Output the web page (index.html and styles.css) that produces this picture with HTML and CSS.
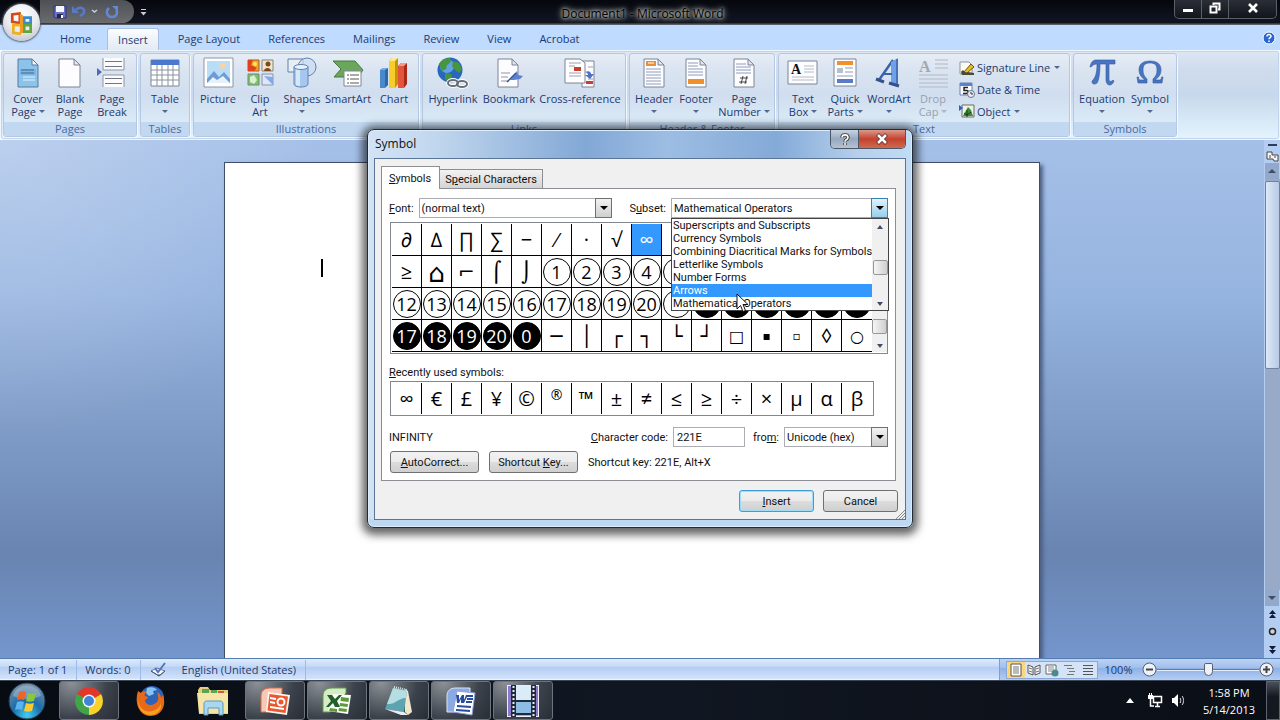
FILE: index.html
```html
<!DOCTYPE html>
<html lang="en">
<head>
	<title>Document1 - Microsoft Word</title>
	<meta charset="utf-8">
	<link rel="stylesheet" href="styles.css">
</head>
<body>
<div class="desktop">
	<!-- title bar -->
	<header class="titlebar">
		<div class="qat">
			<button class="qat-btn" aria-label="Save"><svg width="14" height="14" viewBox="0 0 14 14"><path d="M1 1h12v12H2l-1-1z" fill="#6a70c4" stroke="#2f3480"/><path d="M3 1h8v6H3z" fill="#f4f6ff"/><path d="M4 9h6v4H4z" fill="#22264e"/><path d="M8 10h2v3H8z" fill="#fff"/></svg></button>
			<button class="qat-btn" aria-label="Undo"><svg width="14" height="14" viewBox="0 0 14 14"><path d="M4 5c3-4 9-2 8 2 0 2-2 3-4 4" fill="none" stroke="#5878c8" stroke-width="2.500"/><path d="M0 1v7h7z" fill="#5878c8"/></svg></button>
			<span class="qat-caret"><svg width="7" height="5" viewBox="0 0 7 5"><path d="M1 1l2.500 2L6 1" fill="none" stroke="#c9ced8" stroke-width="1.500"/></svg></span>
			<button class="qat-btn" aria-label="Redo"><svg width="14" height="14" viewBox="0 0 14 14"><path d="M4 3C0 6 2 12 7 12c5 0 6-5 4-7" fill="none" stroke="#6389d6" stroke-width="2.500"/><path d="M7 1h6v6z" fill="#6389d6"/></svg></button>
		</div>
		<button class="qat-more" aria-label="Customize"><svg width="7" height="7" viewBox="0 0 7 7"><path d="M1 .5h5" stroke="#ccc"/><path d="M.5 3h6l-3 3.500z" fill="#ccc"/></svg></button>
		<h1 class="title">Document1 - Microsoft Word</h1>
		<div class="win-btns">
			<button class="win-btn" aria-label="Minimize"><svg width="12" height="12" viewBox="0 0 12 12"><path d="M1 7h10v3H1z" fill="#fff"/></svg></button>
			<button class="win-btn" aria-label="Restore"><svg width="12" height="12" viewBox="0 0 12 12"><path d="M4.500 3V1.500h6v6H9M1.500 4.500h6v6h-6z" fill="none" stroke="#fff" stroke-width="2"/></svg></button>
			<button class="win-btn win-close" aria-label="Close"><svg width="12" height="12" viewBox="0 0 12 12"><path d="M2 2l8 8M10 2l-8 8" stroke="#fff" stroke-width="2.600"/></svg></button>
		</div>
	</header>
	<button class="office" aria-label="Office Button"><svg width="26" height="26" viewBox="0 0 24 24"><g fill="none" stroke-width="2.500"><path d="M11 3L3 4v7l7 1V4" stroke="#d5471c"/><path d="M14 7h6v5h-6z" stroke="#3c8ac9"/><path d="M10 14H4v7l7 1" stroke="#f0b01e"/><path d="M14 14h6v6h-6z" stroke="#62a53c"/></g><path d="M10 3l3 2v16l-3 1z" fill="#f29a28"/></svg></button>

	<!-- ribbon tabs -->
	<nav class="tabs">
		<button class="tab">Home</button>
		<button class="tab tab-on">Insert</button>
		<button class="tab">Page Layout</button>
		<button class="tab">References</button>
		<button class="tab">Mailings</button>
		<button class="tab">Review</button>
		<button class="tab">View</button>
		<button class="tab">Acrobat</button>
		<button class="help" aria-label="Help"><svg width="14" height="14" viewBox="0 0 14 14"><circle cx="7" cy="7" r="6" fill="#2a65d0" stroke="#fff" stroke-width="1"/><path d="M5 5.500C5 3 9 3 9 5.300 9 6.600 7 6.600 7 8.200M7 9.600v1.500" fill="none" stroke="#fff" stroke-width="1.500"/></svg></button>
	</nav>

	<!-- ribbon -->
	<section class="ribbon">
		<div class="group">
			<div class="group-body">
				<button class="big"><svg class="icon" viewBox="0 0 32 32"><path d="M6 2h14l6 6v22H6z" fill="#8cc3ea" stroke="#557a9d"/><path d="M20 2v6h6z" fill="#eef7ff" stroke="#557a9d"/><path d="M8 12h16v6H8z" fill="#7db6e2"/><path d="M9 13h13M9 16h13" stroke="#3c688f"/><path d="M11 20h12M11 23h12" stroke="#e3f3fd"/></svg><span>Cover<br>Page <i class="caret"></i></span></button>
				<button class="big"><svg class="icon" viewBox="0 0 32 32"><path d="M5 2h15l6 6v22H5z" fill="#fdfdff" stroke="#7c8493"/><path d="M20 2v6h6z" fill="#dfe5ee" stroke="#7c8493"/></svg><span>Blank<br>Page</span></button>
				<button class="big"><svg class="icon" viewBox="0 0 32 32"><path d="M7 1h21v12H7zM7 18h21v12H7z" fill="#fcfcff"/><path d="M7 1v12h21V1M7 30V18h21v12" fill="none" stroke="#8b93a2"/><path d="M9 4.500h17M9 9.500h17M9 21.500h17M9 26.500h17" stroke="#6f7684"/><path d="M1 11v8l5-4z" fill="#5268bd"/></svg><span>Page<br>Break</span></button>
			</div>
			<div class="group-name">Pages</div>
		</div>
		<div class="group">
			<div class="group-body">
				<button class="big"><svg class="icon" viewBox="0 0 32 32"><path d="M2 3h28v26H2z" fill="#fff" stroke="#7f8796"/><path d="M2 3h28v5H2z" fill="#4b78cc"/><path d="M2 13h28M2 18h28M2 23h28M8 8v21M13 8v21M19 8v21M24 8v21" stroke="#8991a0"/></svg><span>Table<br><i class="caret"></i></span></button>
			</div>
			<div class="group-name">Tables</div>
		</div>
		<div class="group">
			<div class="group-body">
				<button class="big"><svg class="icon" viewBox="0 0 32 32"><path d="M2 1h29v29H2z" fill="#fff" stroke="#8d95a5"/><path d="M5 4h23v22H5z" fill="#b9ddf7"/><circle cx="21" cy="9" r="3" fill="#f7d3a5"/><path d="M5 22l7-8 5 6 5-5 6 7v4H5z" fill="#6e9bd4"/><path d="M5 26l6-6 4 3 6-4 7 7z" fill="#e6f2fb"/></svg><span>Picture</span></button>
				<button class="big"><svg class="icon" viewBox="0 0 32 32"><path d="M4 3h11v11H4z" fill="#f6a51d" stroke="#a3582b"/><path d="M4 3h5l-2 5 6 3-3 3H4z" fill="#e0401d"/><circle cx="11" cy="7" r="2" fill="#ffe66a"/><path d="M18 3h11v11H18z" fill="#f3e6c8" stroke="#838383"/><path d="M20 14c0-4 7-4 7 0z" fill="#7b4a1e"/><circle cx="24" cy="7" r="2.500" fill="#7b4a1e"/><path d="M4 17h11v11H4z" fill="#7cc36e" stroke="#6c8b6c"/><path d="M6 20l4-2 3 5-3 4-4-2z" fill="#d8f0d0"/><path d="M18 17h11v11H18z" fill="#dbe7fb" stroke="#8b93a2"/><path d="M20 19l9 1v8z" fill="#85a8e6"/></svg><span>Clip<br>Art</span></button>
				<button class="big"><svg class="icon" viewBox="0 0 32 32"><path d="M2 2h15v13H2z" fill="#e8eef6" stroke="#6580a6"/><circle cx="21" cy="10" r="9" fill="#c8dcf3" fill-opacity=".7" stroke="#6580a6"/><path d="M8 10v17c0 4 14 4 14 0V10z" fill="#a6c8ee" stroke="#5f83b5"/><path d="M10 12v16c2 1 3 1 4 1V13z" fill="#d6e8fa"/><ellipse cx="15" cy="10" rx="7" ry="2.500" fill="#e6f1fc" stroke="#5f83b5"/></svg><span>Shapes<br><i class="caret"></i></span></button>
				<button class="big w50"><svg class="icon" viewBox="0 0 32 32"><path d="M1 4h22l8 9-5 7H2l7-8z" fill="#6aa75c" stroke="#477a3e"/><path d="M12 14h17v15H12z" fill="#fff" stroke="#7e8794"/><path d="M15 18h2M15 22h2M15 26h2M18 18h9M18 22h9M18 26h9" stroke="#555"/></svg><span>SmartArt</span></button>
				<button class="big"><svg class="icon" viewBox="0 0 32 32"><path d="M2 13l3-2h5v17l-3 3H2z" fill="#2f6aa8"/><path d="M2 13l3-2h5l-3 2z" fill="#79ade0"/><path d="M2 13h5v18H2z" fill="#4a8aca"/><path d="M11 4l3-3h6v26l-3 4h-6z" fill="#c99300"/><path d="M11 4h6v27h-6z" fill="#f7cd2c"/><path d="M11 4l3-3h6l-3 3z" fill="#ffe98a"/><path d="M20 9l3-3h6v21l-3 4h-6z" fill="#a82918"/><path d="M20 9h6v22h-6z" fill="#e2543b"/><path d="M20 9l3-3h6l-3 3z" fill="#f59b87"/></svg><span>Chart</span></button>
			</div>
			<div class="group-name">Illustrations</div>
		</div>
		<div class="group">
			<div class="group-body">
				<button class="big w54"><svg class="icon" viewBox="0 0 32 32"><circle cx="13" cy="13" r="12.500" fill="#2767bd"/><circle cx="10" cy="9" r="7" fill="#63a2e8"/><path d="M2 7c3-5 8-6 11-6l1 4-4 3-1 4-4 2zM16 4l6 2 3 6-3 4-4-3-3-4zM8 16l6 1 1 4-3 5-4-4z" fill="#48953f"/><g fill="none" stroke="#fff" stroke-width="4"><ellipse cx="16" cy="26" rx="5" ry="3"/><ellipse cx="25" cy="27" rx="5" ry="3"/></g><g fill="none" stroke="#666d76" stroke-width="2"><ellipse cx="16" cy="26" rx="5" ry="3"/><ellipse cx="25" cy="27" rx="5" ry="3"/></g></svg><span>Hyperlink</span></button>
				<button class="big w58"><svg class="icon" viewBox="0 0 32 32"><path d="M5 2h14l6 6v22H5z" fill="#fdfdff" stroke="#7c8493"/><path d="M19 2v6h6z" fill="#dfe5ee" stroke="#7c8493"/><path d="M8 16h9M8 20h7M8 24h8" stroke="#8d95a5"/><path d="M17 23l7-9 1 4 5 1-3 3-6 1z" fill="#5d82cf"/><path d="M14 25l9-9" stroke="#33559c" stroke-width="1.500"/></svg><span>Bookmark</span></button>
				<button class="big w84"><svg class="icon" viewBox="0 0 32 32"><path d="M18 4h12v26H18z" fill="#fbfbfd" stroke="#7c8493"/><path d="M1 2h15l5 4v20H1z" fill="#fff" stroke="#7c8493"/><path d="M5 6h12M5 9h6M5 16h12M5 19h12M24 10h5M24 22h5" stroke="#9aa1ad"/><path d="M10 10h7v4h-7zM22 24h7v3h-7z" fill="#c8402d"/><path d="M21 15c4-2 6 0 6 2h3l-4 5-5-4h3c0-2-1-2-3-3z" fill="#4a72cc"/></svg><span>Cross-reference</span></button>
			</div>
			<div class="group-name">Links</div>
		</div>
		<div class="group">
			<div class="group-body">
				<button class="big"><svg class="icon" viewBox="0 0 32 32"><path d="M6 2h14l6 6v22H6z" fill="#fdfdff" stroke="#7c8493"/><path d="M20 2v6h6z" fill="#dfe5ee" stroke="#7c8493"/><path d="M8 4h10v5H8z" fill="#e69138"/><path d="M10 6h6" stroke="#fff"/><path d="M8 12h15M8 15h15M8 18h15M8 21h15M8 24h15M8 27h15" stroke="#8d9cbd"/></svg><span>Header<br><i class="caret"></i></span></button>
				<button class="big"><svg class="icon" viewBox="0 0 32 32"><path d="M6 2h14l6 6v22H6z" fill="#fdfdff" stroke="#7c8493"/><path d="M20 2v6h6z" fill="#dfe5ee" stroke="#7c8493"/><path d="M8 6h10M8 9h10M8 12h15M8 15h15M8 18h15" stroke="#8d9cbd"/><path d="M8 22h16v5H8z" fill="#f0902a"/></svg><span>Footer<br><i class="caret"></i></span></button>
				<button class="big w54"><svg class="icon" viewBox="0 0 32 32"><path d="M6 2h14l6 6v22H6z" fill="#fdfdff" stroke="#7c8493"/><path d="M20 2v6h6z" fill="#dfe5ee" stroke="#7c8493"/><path d="M8 7h10M8 10h15M8 13h15M8 16h15" stroke="#8d9cbd"/><path d="M15 19l-2 8M19 19l-2 8M12 21h8M11 25h8" stroke="#444"/></svg><span>Page<br>Number <i class="caret"></i></span></button>
			</div>
			<div class="group-name">Header &amp; Footer</div>
		</div>
		<div class="group">
			<div class="group-body">
				<button class="big"><svg class="icon" viewBox="0 0 32 32"><path d="M1 4h29v23H1z" fill="#fdfdff" stroke="#7c8493"/><path d="M17 9h10M17 12h10M17 15h10M5 20h22M5 23h22" stroke="#b3bac6"/><text x="4" y="17" font-family="Liberation Serif, serif" font-weight="bold" font-size="14" fill="#111">A</text></svg><span>Text<br>Box <i class="caret"></i></span></button>
				<button class="big"><svg class="icon" viewBox="0 0 32 32"><path d="M5 2h22v27H5z" fill="#fdfdff" stroke="#7c8493"/><path d="M8 4h16v4H8z" fill="#f0902a"/><path d="M8 11h6v5H8z" fill="#b5bfd2"/><path d="M16 11h8M16 15h8M8 19h16" stroke="#8d9cbd"/><path d="M8 22h16v4H8z" fill="#5a7cc6"/></svg><span>Quick<br>Parts <i class="caret"></i></span></button>
				<button class="big w46"><svg class="icon" viewBox="0 0 32 32"><path d="M6 23L20 3" stroke="#3c62ab" stroke-width="2.500"/><path d="M18 5l7-4v27l-7-2z" fill="#6da2e8"/><path d="M24 2v26" stroke="#3c62ab" stroke-width="1.500"/><path d="M11 17h8" stroke="#3c62ab" stroke-width="2"/><path d="M3 22l8 3M16 26l10 3" stroke="#33528d" stroke-width="3"/></svg><span>WordArt<br><i class="caret"></i></span></button>
				<button class="big" disabled><svg class="icon" viewBox="0 0 32 32"><path d="M18 3h13M18 7h13M18 11h13M2 18h29M2 22h29M2 26h29M2 30h29" stroke="#b3b8c0"/><text x="2" y="15" font-family="Liberation Serif, serif" font-weight="bold" font-size="16" fill="#a3a7ad">A</text></svg><span>Drop<br>Cap <i class="caret"></i></span></button>
				<div class="small-col">
					<button class="small"><svg width="16" height="16" viewBox="0 0 16 16"><path d="M1 2h9l3 3v9H1z" fill="#fbfbf4" stroke="#8b93a2"/><path d="M4 13l8-9 3 3-7 6z" fill="#e9b92b" stroke="#6d5410"/><path d="M2 12c3-5 3 3 7 0l6 1v2H3z" fill="#4b4b34"/></svg>Signature Line <i class="caret"></i></button>
					<button class="small"><svg width="16" height="16" viewBox="0 0 16 16"><path d="M1 1h12v12H1z" fill="#fff" stroke="#6a7fae"/><path d="M1 1h12v3H1z" fill="#5a82cf"/><path d="M9 5.500H5v3h3c2 0 1 3-1 3H4" fill="none" stroke="#222" stroke-width="1.500"/><circle cx="12" cy="12" r="3.500" fill="#e8eef8" stroke="#6a748a"/><path d="M12 10v2h2" fill="none" stroke="#333"/></svg>Date &amp; Time</button>
					<button class="small"><svg width="16" height="16" viewBox="0 0 16 16"><path d="M3 2h12v12H3z" fill="#eef2e6" stroke="#65705c"/><path d="M0 2l4 3-4 3z" fill="#2f5fcc"/><path d="M4 13l5-9 3 3 2 6z" fill="#3c8b3a"/><path d="M8 7v7M5 10l3 2 4-3" stroke="#173d18" fill="none"/></svg>Object <i class="caret"></i></button>
				</div>
			</div>
			<div class="group-name">Text</div>
		</div>
		<div class="group">
			<div class="group-body">
				<button class="big w50"><svg class="icon" viewBox="0 0 32 32"><path d="M4 10c1-5 3-7 6-7h19v4h-6v15c0 3 2 3 4 1l1 1c-2 6-8 5-8-1V7h-6c0 8-1 16-3 19-2 2-5 1-5-1 0-3 5-2 5-18-3 0-4 1-6 3z" fill="#4874c4" stroke="#38599a" stroke-width=".6"/></svg><span>Equation<br><i class="caret"></i></span></button>
				<button class="big w46"><svg class="icon" viewBox="0 0 32 32"><path d="M3 20h1.500c0 3 1 3 3 3h3.500C7 20 5 17 5 13 5 7 9 4 16 4s11 3 11 9c0 4-2 7-6 10h3.500c2 0 3 0 3-3H29l-1 6h-9v-4c3-3 4-5 4-9 0-5-2-7-7-7s-7 2-7 7c0 4 1 6 4 9v4H4z" fill="#4874c4" stroke="#38599a" stroke-width=".6"/></svg><span>Symbol<br><i class="caret"></i></span></button>
			</div>
			<div class="group-name">Symbols</div>
		</div>
	</section>

	<!-- document -->
	<main class="work">
		<div class="canvas">
			<div class="page"><span class="text-cursor"></span></div>
		</div>
		<div class="vscroll">
			<span class="split"></span>
			<svg width="13" height="13" viewBox="0 0 13 13"><path d="M1 2h5v3h6v6H8L7 9H1z" fill="#f6f6f6" stroke="#444"/><path d="M4 5v3M8 7h2" stroke="#444"/></svg>
			<span class="vs-arrow"><i class="tri-up"></i></span>
			<span class="vs-track"><span class="vs-thumb"></span></span>
			<span class="vs-arrow"><i class="tri-down"></i></span>
			<span class="browse">
				<svg width="9" height="9" viewBox="0 0 9 9"><path d="M4.500 0L8 4H1zM4.500 4L8 8H1z" fill="#111c3b"/></svg>
				<svg width="9" height="9" viewBox="0 0 9 9"><circle cx="4.500" cy="4.500" r="3" fill="#cfd3da" stroke="#222" stroke-width="1.500"/></svg>
				<svg width="9" height="9" viewBox="0 0 9 9"><path d="M4.500 5L8 1H1zM4.500 9L8 5H1z" fill="#111c3b"/></svg>
			</span>
		</div>
	</main>

	<!-- status bar -->
	<footer class="status">
		<span class="st-item">Page: 1 of 1</span>
		<span class="st-item">Words: 0</span>
		<span class="st-proof"><svg width="17" height="16" viewBox="0 0 17 16"><path d="M1 9l6-3 8 3-6 5z" fill="#f4f6fa" stroke="#6a7894"/><path d="M1 9l8 5v-2M9 14l6-5" fill="none" stroke="#46546e"/><path d="M5 6l3 4 7-9" fill="none" stroke="#5277bd" stroke-width="2"/></svg></span>
		<span class="st-item">English (United States)</span>
		<div class="st-right">
			<div class="views">
				<button class="view view-on" aria-label="Print Layout"><svg width="14" height="14" viewBox="0 0 14 14"><path d="M2 1h10v12H2z" fill="#fff" stroke="#555"/><path d="M4 4h6M4 6h6M4 8h6M4 10h6" stroke="#777"/></svg></button>
				<button class="view" aria-label="Full Screen Reading"><svg width="14" height="14" viewBox="0 0 14 14"><path d="M1 2l5 2v8l-5-2zM13 2L8 4v8l5-2z" fill="#f5f5f5" stroke="#555"/><path d="M2 5l3 1M2 8l3 1M9 6l3-1M9 9l3-1" stroke="#777"/></svg></button>
				<button class="view" aria-label="Web Layout"><svg width="14" height="14" viewBox="0 0 14 14"><path d="M1 2h10v9H1z" fill="#fff" stroke="#666"/><path d="M3 4h6M3 6h6M3 8h4" stroke="#888"/><circle cx="10" cy="10" r="3.500" fill="#4a8a8f"/></svg></button>
				<button class="view" aria-label="Outline"><svg width="14" height="14" viewBox="0 0 14 14"><path d="M1 2.500h8M4 5.500h7M6 8.500h6M4 11.500h7" stroke="#777"/></svg></button>
				<button class="view" aria-label="Draft"><svg width="14" height="14" viewBox="0 0 14 14"><path d="M2 2.500h10M2 5.500h10M2 8.500h10M2 11.500h10" stroke="#555"/></svg></button>
			</div>
			<button class="zoom-text">100%</button>
			<button class="zoom-btn" aria-label="Zoom Out"><svg width="15" height="15" viewBox="0 0 15 15"><circle cx="7.500" cy="7.500" r="6.500" fill="#eef2f8" stroke="#555f70"/><path d="M4 7.500h7" stroke="#444" stroke-width="2"/></svg></button>
			<input class="zoom-range" type="range" min="0" max="100" value="50" aria-label="Zoom">
			<button class="zoom-btn" aria-label="Zoom In"><svg width="15" height="15" viewBox="0 0 15 15"><circle cx="7.500" cy="7.500" r="6.500" fill="#eef2f8" stroke="#555f70"/><path d="M4 7.500h7M7.500 4v7" stroke="#444" stroke-width="2"/></svg></button>
		</div>
	</footer>

	<!-- windows taskbar -->
	<div class="taskbar">
		<button class="orb" aria-label="Start"><svg width="38" height="38" viewBox="0 0 38 38"><defs><radialGradient id="orb" cx=".5" cy=".9" r=".9"><stop offset="0" stop-color="#3fd0f5"/><stop offset=".45" stop-color="#1c6ca8"/><stop offset="1" stop-color="#7c93a8"/></radialGradient></defs><circle cx="19" cy="19" r="18" fill="url(#orb)" stroke="#22384c"/><path d="M5 14c3-14 25-14 28 0-9 4-19 4-28 0z" fill="#fff" fill-opacity=".25"/><path d="M11 10c2-1 5-1 7 0l-2 8c-2-1-5-1-7 0z" fill="#f0642a"/><path d="M20 11c2 1 5 1 8 0l-2 8c-3 1-6 1-8 0z" fill="#8cc63e"/><path d="M9 20c2-1 5-1 7 0l-2 8c-2-1-5-1-7 0z" fill="#5ab4ee"/><path d="M18 21c2 1 5 1 8 0l-2 8c-3 1-6 1-8 0z" fill="#fcc92e"/></svg></button>
		<button class="task task-run" aria-label="Chrome"><svg width="30" height="30" viewBox="0 0 30 30"><path d="M15 15L2.900 8A14 14 0 0 1 27.100 8z" fill="#e0392b"/><path d="M15 15L27.100 8A14 14 0 0 1 15 29z" fill="#fbd22c"/><path d="M15 15L15 29A14 14 0 0 1 2.900 8z" fill="#3fa546"/><path d="M15 8h12L15 15z" fill="#e0392b"/><path d="M3 8l6 10 6-3z" fill="#3fa546"/><path d="M21 18l-6 11V15z" fill="#fbd22c"/><circle cx="15" cy="15" r="6.500" fill="#f4f6f8"/><circle cx="15" cy="15" r="5" fill="#3f84d8"/></svg></button>
		<button class="task" aria-label="Firefox"><svg width="32" height="32" viewBox="0 0 32 32"><circle cx="17" cy="13" r="12" fill="#2d63b8"/><path d="M12 3c5-2 9 0 10 2l-4 1 1 3-5 2-3-3z" fill="#86c3f0"/><path d="M3 6l3 2c2-2 4-2 6-1-2 1-3 3-2 4l3 1c0 2-3 2-3 4 1 4 6 5 9 3 5-2 5-7 3-12 3 2 4 3 4 6l2-3c3 8 1 20-12 21C4 31-1 18 3 6z" fill="#e66a17"/><path d="M3 13c0 9 6 15 14 13 5-1 8-4 9-8 1 8-5 12-10 12C8 30 2 24 3 13z" fill="#f6a11f"/></svg></button>
		<button class="task" aria-label="Explorer"><svg width="34" height="30" viewBox="0 0 34 30"><path d="M2 4l2-3h8l2 3h18v24H3z" fill="#e9cf7c"/><path d="M6 3h7v4H6zM15 4h6v4h-6z" fill="#5aa55a"/><path d="M22 5h6v3h-6z" fill="#cf5b45"/><path d="M1 7h31v20H3z" fill="#f6e6a6"/><path d="M8 29V18c0-3 2-3 3-3h13c2 0 3 1 3 3v11h-4v-7H12v7z" fill="#a9d6f0" stroke="#5d98c0"/></svg></button>
		<button class="task task-run" aria-label="PowerPoint"><svg width="32" height="30" viewBox="0 0 32 30"><path d="M2 10c0-5 3-8 9-8h12v5L9 26H2z" fill="#f6c9b6" stroke="#d5694a"/><path d="M9 6l22 3-3 20-21-3z" fill="#fff6f0"/><path d="M10.500 8l18.500 2.500-2.500 16.500L8.500 24.500z" fill="#e9582f"/><path d="M11 11l6 1v2l-6-1zM11 15l5 1v2l-5-1zM11 20l14 2v2l-14-2z" fill="#fff"/><circle cx="22" cy="16" r="3.500" fill="none" stroke="#fff" stroke-width="2"/></svg></button>
		<button class="task task-run" aria-label="Excel"><svg width="32" height="30" viewBox="0 0 32 30"><path d="M2 10c0-5 3-8 9-8h14v5L9 26H2z" fill="#d6ecc6" stroke="#5d9a48"/><path d="M12 8l18 1-3 19-20-3z" fill="#fdfff9"/><path d="M20 11l8 1-.5 4-8-1zM19 17l8 1-.5 3-8-1zM18 22l8 1-.5 3-8-1zM9 22l7 1v3l-8-1z" fill="#5e9a3c"/><path d="M6 9h5l3 4 4-4h3l-5 6 3 6h-5l-2-4-4 4H5l5-6z" fill="#205e2a"/></svg></button>
		<button class="task task-run" aria-label="Notepad"><svg width="32" height="30" viewBox="0 0 32 30"><path d="M22 3l3 2 4 21-4 3-3-3z" fill="#efe6cc"/><path d="M10 2l14 3-3 21-19-3z" fill="#5da3b0"/><path d="M10 2l14 3-1 7c-8 0-11 7-19 6z" fill="#b6dde2"/><path d="M2 23l19 3 4 3-7 0z" fill="#e9eff0"/><path d="M11 1l13 3" stroke="#d9e4e6" stroke-width="2" stroke-dasharray="1 1"/></svg></button>
		<button class="task task-run" aria-label="Word"><svg width="32" height="30" viewBox="0 0 32 30"><path d="M2 10c0-5 3-8 9-8h14v5L9 26H2z" fill="#8ba9e2" stroke="#dbe5f8"/><path d="M12 5l18 2-3 22-19-3z" fill="#fdfdff" stroke="#8aa4d6"/><path d="M22 10h6M22 13h6M21 16h6M12 20l14 1M11 24l14 1" stroke="#2b4c9c" stroke-width="2"/><path d="M11 9h3v5l3-5h2v5l2-5h2l-4 8h-3v-4l-2 4h-2z" fill="#2b4c9c"/></svg></button>
		<button class="task task-run" aria-label="Video"><svg width="32" height="32" viewBox="0 0 32 32"><path d="M0 0h32v32H0z" fill="#f0ecfb"/><path d="M1 1h3v30H1zM28 1h3v30h-3z" fill="#8a78c8"/><path d="M4 0h5v32H4zM24 0h5v32h-5z" fill="#202a3a"/><path d="M6.500 1v30M26.500 1v30" stroke="#e8ecf4" stroke-width="2" stroke-dasharray="2 2"/><path d="M9 1h15v14H9z" fill="#d9ecf8"/><path d="M9 17h15v14H9z" fill="#8dbce4"/><path d="M9 16h15M9 29h15" stroke="#202a3a" stroke-width="2"/></svg></button>
		<div class="tray">
			<svg width="8" height="5" viewBox="0 0 8 5"><path d="M4 0l4 5H0z" fill="#fff"/></svg>
			<svg width="15" height="15" viewBox="0 0 15 15"><path d="M5.500 3.500h8v6h-8zM7 13.500h5M9.500 10v3M2.500 6v7H6" fill="none" stroke="#fff" stroke-width="1.500"/><path d="M0 2h5v4H0zM1 0h1v2H1zM3 0h1v2H3z" fill="#fff"/></svg>
			<svg width="15" height="15" viewBox="0 0 15 15"><path d="M1 5h2l4-4v13l-4-4H1z" fill="#fff"/><path d="M9 5c1 1 1 4 0 5M11 3c2 2 2 7 0 9" fill="none" stroke="#ddd"/></svg>
			<div class="clock">1:58 PM<br>5/14/2013</div>
			<button class="show-desktop" aria-label="Show desktop"></button>
		</div>
	</div>

	<!-- Symbol dialog -->
	<div class="dialog" role="dialog" aria-label="Symbol">
		<div class="dlg-title">
			<h2>Symbol</h2>
			<div class="dlg-btns">
				<button class="dlg-help" aria-label="Help"><svg width="12" height="13" viewBox="0 0 12 13"><path d="M3 4.500C3 1 9 1 9 4.500 9 7 6 6.500 6 8.500M6 10v2" fill="none" stroke="#333" stroke-width="3.400"/><path d="M3 4.500C3 1 9 1 9 4.500 9 7 6 6.500 6 8.500M6 10v2" fill="none" stroke="#fff" stroke-width="1.600"/></svg></button>
				<button class="dlg-close" aria-label="Close"><svg width="12" height="12" viewBox="0 0 12 12"><path d="M1.500 1.500l9 9M10.500 1.500l-9 9" stroke="#5b2a2a" stroke-width="4"/><path d="M2 2l8 8M10 2l-8 8" stroke="#fff" stroke-width="2.500"/></svg></button>
			</div>
		</div>
		<div class="client">
			<div class="dtabs">
				<button class="dtab dtab-on"><u>S</u>ymbols</button>
				<button class="dtab">S<u>p</u>ecial Characters</button>
			</div>
			<div class="panel">
				<div class="row font-row">
					<label for="font"><u>F</u>ont:</label>
					<div class="combo combo-font"><select id="font"><option>(normal text)</option></select></div>
					<label class="to-right" for="subset">S<u>u</u>bset:</label>
					<div class="combo combo-subset combo-open">
						<select id="subset"><option>Mathematical Operators</option></select>
						<div class="drop">
							<ul class="drop-list" role="listbox">
								<li>Superscripts and Subscripts</li>
								<li>Currency Symbols</li>
								<li>Combining Diacritical Marks for Symbols</li>
								<li>Letterlike Symbols</li>
								<li>Number Forms</li>
								<li class="hot">Arrows</li>
								<li>Mathematical Operators</li>
							</ul>
							<div class="bar bar-drop"><i class="tri-up"></i><span class="bar-thumb"></span><i class="tri-down"></i></div>
						</div>
					</div>
				</div>
				<div class="sym-box">
					<div class="sym-grid">
						<button>∂</button><button>∆</button><button>∏</button><button>∑</button><button>−</button><button>⁄</button><button>·</button><button>√</button><button class="picked">∞</button><button></button><button></button><button></button><button></button><button></button><button></button><button></button>
						<button>≥</button><button class="large">⌂</button><button>⌐</button><button>⌠</button><button>⌡</button><button><b>1</b></button><button><b>2</b></button><button><b>3</b></button><button><b>4</b></button><button><b></b></button><button></button><button></button><button></button><button></button><button></button><button></button>
						<button><b>12</b></button><button><b>13</b></button><button><b>14</b></button><button><b>15</b></button><button><b>16</b></button><button><b>17</b></button><button><b>18</b></button><button><b>19</b></button><button><b>20</b></button><button><b></b></button><button><b class="neg"></b></button><button><b class="neg"></b></button><button><b class="neg"></b></button><button><b class="neg"></b></button><button><b class="neg"></b></button><button><b class="neg"></b></button>
						<button><b class="neg">17</b></button><button><b class="neg">18</b></button><button><b class="neg">19</b></button><button><b class="neg">20</b></button><button><b class="neg">0</b></button><button>─</button><button>│</button><button>┌</button><button>┐</button><button>└</button><button>┘</button><button class="mid">□</button><button class="tiny">▪</button><button class="tiny">▫</button><button>◊</button><button class="mid">○</button>
					</div>
					<div class="bar bar-grid"><span class="bar-thumb"></span><i class="tri-down"></i></div>
				</div>
				<div class="recent-label"><u>R</u>ecently used symbols:</div>
				<div class="recent">
					<button>∞</button><button>€</button><button>£</button><button>¥</button><button>©</button><button class="sup">®</button><button>™</button><button>±</button><button>≠</button><button>≤</button><button>≥</button><button>÷</button><button>×</button><button>µ</button><button>α</button><button>β</button>
				</div>
				<div class="row code-row">
					<span>INFINITY</span>
					<label class="to-right" for="code"><u>C</u>haracter code:</label>
					<input class="code" id="code" type="text" value="221E">
					<label for="from">fro<u>m</u>:</label>
					<div class="combo combo-from"><select id="from"><option>Unicode (hex)</option></select></div>
				</div>
				<div class="row key-row">
					<button class="btn"><u>A</u>utoCorrect...</button>
					<button class="btn">Shortcut <u>K</u>ey...</button>
					<span>Shortcut key: 221E, Alt+X</span>
				</div>
			</div>
			<div class="dlg-foot">
				<button class="btn btn-main"><u>I</u>nsert</button>
				<button class="btn">Cancel</button>
			</div>
			<svg class="grip" width="10" height="10" viewBox="0 0 10 10"><path d="M1 10l9-9M4 10l6-6M7 10l3-3" stroke="#8a8a8a"/></svg>
		</div>
		<svg class="pointer" width="13" height="20" viewBox="0 0 13 20"><path d="M1 1v15l3.500-3.500L7 18.500l2.500-1-2.500-6H12z" fill="#fff" stroke="#111"/></svg>
	</div>
</div>
</body>
</html>
```
FILE: styles.css
```css
*, *::before, *::after {
	box-sizing: border-box;
}
body {
	margin: 0;
	font-family: "Open Sans", "Noto Sans", sans-serif;
	font-size: 11px;
	color: #1e3a6e;
}
button, input, select {
	font: inherit;
	color: inherit;
	margin: 0;
	padding: 0;
	border: none;
	border-radius: 0;
	background: none;
}
svg {
	display: block;
	flex: none;
}
h1, h2 {
	margin: 0;
	font-weight: normal;
}
.desktop {
	position: relative;
	display: flex;
	flex-direction: column;
	height: 100vh;
	overflow: hidden;
}

/* title bar */
.titlebar {
	display: flex;
	height: 25px;
	background: linear-gradient(#05070d, #0f1421 80%, #10131b 90%, #6a737d);
}
.qat {
	display: flex;
	align-items: center;
	gap: 5px;
	width: 94px;
	height: 23px;
	margin-left: 40px;
	padding-left: 13px;
	border-radius: 0 12px 12px 0;
	background: linear-gradient(#4d5054, #6a6c70);
}
.qat-caret {
	margin-right: 2px;
}
.qat-more {
	padding: 0 6px;
}
.title {
	flex: 1;
	padding-right: 42px;
	line-height: 27px;
	font-size: 12px;
	text-align: center;
	color: #000;
	text-shadow: 0 0 3px #b9b9b4, 0 0 4px #b9b9b4, 0 0 6px #b0b0aa, 0 0 10px #96968f;
}
.win-btns {
	display: flex;
	height: 19px;
	margin-right: 3px;
	border: 1px solid #596069;
	border-top: none;
	border-radius: 0 0 5px 5px;
	background: linear-gradient(#2a2e36, #12151c);
}
.win-btn {
	display: flex;
	align-items: center;
	justify-content: center;
	width: 27px;
	padding-bottom: 2px;
	border-right: 1px solid #596069;
}
.win-close {
	width: 47px;
	border-right: none;
}
.office {
	position: absolute;
	left: 3px;
	top: 4px;
	display: flex;
	align-items: center;
	justify-content: center;
	width: 37px;
	height: 37px;
	border-radius: 50%;
	background: radial-gradient(circle at 50% 30%, #fff, #e8eaee 50%, #b3b9c4);
	box-shadow: 0 0 2px 1px #555c68;
}

/* tabs */
.tabs {
	display: flex;
	height: 25px;
	padding: 3px 4px 0 46px;
	background: #bfdbff;
}
.tab {
	padding: 0 14px;
	line-height: 20px;
}
.tab-on {
	padding: 0 10px;
	margin: 0 5px 0 2px;
	border: 1px solid #a9bfdf;
	border-bottom: none;
	border-radius: 3px 3px 0 0;
	background: linear-gradient(#fafcff, #e2eaf5);
}
.help {
	margin-left: auto;
	padding-bottom: 3px;
}

/* ribbon */
.ribbon {
	display: flex;
	gap: 3px;
	height: 90px;
	padding: 2px;
	border: 1px solid #eef5fd;
	border-radius: 3px;
	background: linear-gradient(#dde7f3, #cfdced 20%, #c8d8ec 50%, #e3f4fe);
	box-shadow: inset 0 0 0 1px #c3d5ec;
}
.group {
	display: flex;
	flex-direction: column;
	height: 84px;
	border: 1px solid #b4c8e2;
	border-radius: 3px;
	background: linear-gradient(rgba(255, 255, 255, .3), rgba(255, 255, 255, 0));
	box-shadow: 1px 1px 0 #f2f8ff;
}
.group-body {
	display: flex;
	height: 68px;
	padding: 3px 3px 0;
}
.group-name {
	height: 14px;
	line-height: 14px;
	text-align: center;
	color: #4a6a9e;
	background: #c2d8f1;
}
.big {
	display: flex;
	flex-direction: column;
	align-items: center;
	gap: 3px;
	width: 42px;
	line-height: 13px;
	white-space: nowrap;
}
.big:disabled {
	color: #98a0ac;
}
.icon {
	width: 32px;
	height: 32px;
}
.w46 {
	width: 46px;
}
.w50 {
	width: 50px;
}
.w54 {
	width: 54px;
}
.w58 {
	width: 58px;
}
.w84 {
	width: 84px;
}
.caret {
	display: inline-block;
	vertical-align: 3px;
	border: 3px solid transparent;
	border-top-color: #56688a;
	border-bottom: none;
}
.big:disabled .caret {
	border-top-color: #b0b6c0;
}
.small-col {
	display: flex;
	flex-direction: column;
	width: 112px;
	padding-left: 5px;
}
.small {
	display: flex;
	align-items: center;
	gap: 2px;
	height: 22px;
	white-space: nowrap;
}
.small .caret {
	margin-left: 2px;
}

/* work area */
.work {
	flex: 1;
	display: flex;
	min-height: 0;
	background: radial-gradient(ellipse 320px 300px at 0 0, rgba(255, 255, 255, .25), transparent), linear-gradient(#a5c0e8, #96b4e0 30%, #6984b0 80%, #7496cd);
}
.canvas {
	flex: 1;
	padding-top: 22px;
	overflow: hidden;
}
.page {
	width: 816px;
	height: 1056px;
	margin: 0 auto;
	padding: 96px;
	border: 1px solid #3f4f6b;
	background: #fff;
	box-shadow: 3px 3px 4px #4c5f80;
}
.text-cursor {
	display: block;
	width: 2px;
	height: 18px;
	background: #000;
}
.vscroll {
	display: flex;
	flex-direction: column;
	align-items: center;
	width: 16px;
	padding-top: 4px;
	background: #b4cdf2;
}
.split {
	width: 9px;
	height: 3px;
	margin-bottom: 3px;
	border-top: 2px solid #2b3c5e;
}
.vs-arrow {
	display: flex;
	align-items: center;
	justify-content: center;
	width: 14px;
	height: 16px;
	background: #93a9cb;
}
.vs-track {
	flex: 1;
	width: 15px;
	padding-top: 2px;
	background: #98aac7;
}
.vs-thumb {
	display: block;
	height: 46%;
	border: 1px solid #6f82a3;
	border-radius: 2px;
	background: linear-gradient(90deg, #dde8f7, #b8cae6);
}
.browse {
	display: flex;
	flex-direction: column;
	align-items: center;
	justify-content: space-around;
	height: 52px;
}
.tri-up, .tri-down {
	border: 4px solid transparent;
}
.tri-up {
	border-bottom-color: #3f4d68;
	border-top: none;
}
.tri-down {
	border-top-color: #3f4d68;
	border-bottom: none;
}

/* status bar */
.status {
	display: flex;
	align-items: center;
	height: 22px;
	border-top: 1px solid #567db1;
	background: linear-gradient(#dfebfc, #c4d9f8 35%, #b3cdf3 40%, #d3e3fa 95%, #fff);
}
.st-item {
	padding: 0 9px 0 8px;
	line-height: 20px;
	border-right: 1px solid #9dbbe6;
}
.st-proof {
	padding: 0 15px 0 9px;
}
.st-proof + .st-item {
	padding-left: 0;
}
.st-right {
	display: flex;
	align-items: center;
	height: 100%;
	margin-left: auto;
	padding: 0 6px;
	border-left: 1px solid #7e9fd0;
	background: linear-gradient(#bcd3f5, #a3c0ec 40%, #8fb1e6 45%, #b5cdf2);
}
.views {
	display: flex;
	border: 1px solid #8aa8d6;
	background: #d5e3f7;
}
.view {
	padding: 1px 2px;
}
.view-on {
	background: #fbd77b;
}
.zoom-text {
	width: 44px;
	padding-right: 3px;
}
.zoom-range {
	appearance: none;
	width: 102px;
	height: 15px;
	background: linear-gradient(transparent 7px, #5f7ba8 7px, #5f7ba8 8px, #e6effb 8px, #e6effb 9px, transparent 9px);
}
.zoom-range::-webkit-slider-thumb {
	appearance: none;
	width: 9px;
	height: 13px;
	border: 1px solid #555f70;
	border-radius: 2px 2px 5px 5px;
	background: #eef2f8;
}

/* taskbar */
.taskbar {
	display: flex;
	gap: 2px;
	height: 40px;
	padding-left: 8px;
	border-top: 1px solid #3b4654;
	background: linear-gradient(90deg, #070b12, #111722 50%, #0a0e16);
}
.orb {
	width: 49px;
}
.task {
	display: flex;
	align-items: center;
	justify-content: center;
	width: 60px;
}
.task-run {
	border: 1px solid #6d747e;
	border-radius: 3px;
	background: radial-gradient(circle at 20% 0, #8d9298, #3c424b 60%, #282d36);
}
.tray {
	display: flex;
	align-items: center;
	gap: 8px;
	margin-left: auto;
}
.tray svg:first-child {
	margin-right: 6px;
}
.clock {
	width: 58px;
	margin-left: 6px;
	line-height: 17px;
	text-align: center;
	color: #fff;
}
.show-desktop {
	align-self: stretch;
	width: 14px;
	border: 1px solid #5d646f;
	background: linear-gradient(#4a505a, #14181f 40%);
}

/* symbol dialog */
.dialog {
	position: absolute;
	left: 50%;
	top: 129px;
	width: 546px;
	margin-left: -273px;
	padding: 0 6px 7px;
	border: 1px solid #222b38;
	border-radius: 7px;
	font-family: Roboto, "Liberation Sans", sans-serif;
	color: #111;
	background: linear-gradient(90deg, #d3e3f5 0, #c2d7ee 12%, #9dbce0 28%, #82a8d6 40%, #9dbde3 55%, #84aad8 75%, #b5cfec 90%, #c2dcf5);
	box-shadow: inset 0 0 0 1px #dcecfb, inset 0 -7px 0 #bdd8f3, 0 2px 9px 5px rgba(0, 0, 0, .6);
}
.dlg-title {
	display: flex;
	justify-content: space-between;
	height: 28px;
}
.dlg-title h2 {
	padding-left: 1px;
	line-height: 28px;
	font-family: "Open Sans", "Noto Sans", sans-serif;
	font-size: 12px;
}
.dlg-btns {
	display: flex;
	height: 19px;
	border: 1px solid #4b5668;
	border-top: none;
	border-radius: 0 0 5px 5px;
	overflow: hidden;
}
.dlg-btns button {
	display: flex;
	align-items: center;
	justify-content: center;
}
.dlg-btns .dlg-help {
	width: 28px;
	border-right: 1px solid #4b5668;
	background: linear-gradient(#c8d4e2, #98a8bd 50%, #b4c2d4);
}
.dlg-close {
	width: 46px;
	background: linear-gradient(#dc9a8c, #c4422e 50%, #cf6a4c);
}
.client {
	position: relative;
	padding: 7px 7px 5px 6px;
	border: 1px solid #5a7595;
	background: #f0f0f0;
}
.dtabs {
	display: flex;
	align-items: flex-end;
	height: 22px;
}
.dtab {
	height: 19px;
	padding: 0 5px;
	border: 1px solid #8c8e94;
	border-left: none;
	border-bottom: none;
	background: linear-gradient(#f2f2f2, #d4d4d4);
}
.dtab-on {
	position: relative;
	z-index: 1;
	height: 23px;
	margin-bottom: -1px;
	padding: 0 8px 0 7px;
	border-left: 1px solid #8c8e94;
	background: #fff;
}
.panel {
	margin-right: 2px;
	padding: 9px 7px 7px;
	border: 1px solid #8c8e94;
	background: #fff;
}
.row {
	display: flex;
	align-items: center;
}
.to-right {
	margin-left: auto;
}
.font-row {
	height: 20px;
}
.combo {
	position: relative;
	height: 20px;
	margin-left: 5px;
	border: 1px solid #abadb3;
}
.combo select {
	appearance: none;
	width: 100%;
	height: 100%;
	padding: 0 18px 0 2px;
}
.combo::before {
	content: "";
	position: absolute;
	right: -1px;
	top: -1px;
	width: 17px;
	height: 20px;
	border: 1px solid #707070;
	background: linear-gradient(#f2f2f2, #cfcfcf);
	pointer-events: none;
}
.combo::after {
	content: "";
	position: absolute;
	right: 3px;
	top: 7px;
	border: 4px solid transparent;
	border-top-color: #000;
	border-bottom: none;
}
.combo-open::before {
	border-color: #3c7fb1;
	background: linear-gradient(#dff2fc, #98cfee);
}
.combo-font {
	width: 193px;
}
.combo-subset {
	width: 217px;
}
.combo-from {
	width: 104px;
}
.drop {
	position: absolute;
	z-index: 2;
	left: -1px;
	top: 19px;
	display: flex;
	width: 218px;
	border: 1px solid #444;
	background: #fff;
}
.drop-list {
	flex: 1;
	margin: 0;
	padding: 0;
	list-style: none;
	line-height: 13px;
	white-space: nowrap;
}
.drop-list li {
	padding-left: 1px;
}
.drop-list .hot {
	color: #fff;
	background: #3399ff;
}
.bar {
	display: flex;
	flex-direction: column;
	align-items: center;
	width: 17px;
	padding: 6px 0 4px;
	background: #f0f0f0;
}
.bar .tri-up, .bar .tri-down {
	border-left-width: 3px;
	border-right-width: 3px;
}
.bar .tri-down {
	margin-top: auto;
}
.bar-thumb {
	width: 15px;
	height: 15px;
	border: 1px solid #979797;
	border-radius: 2px;
	background: linear-gradient(90deg, #f5f5f5, #cfcfcf);
}
.bar-drop .bar-thumb {
	margin-top: 31px;
}

/* symbol tables */
.sym-box {
	display: flex;
	justify-content: space-between;
	margin: 4px 0 0 1px;
	padding: 1px;
	border: 1px solid #828790;
}
.sym-grid {
	display: grid;
	grid-template-columns: repeat(16, 30px);
	grid-auto-rows: 32px;
}
.sym-grid button, .recent button {
	display: flex;
	align-items: center;
	justify-content: center;
	border-right: 1px solid #000;
	font-family: "Open Sans", "Noto Sans", "DejaVu Sans", sans-serif;
	font-size: 20px;
	line-height: 28px;
	color: #000;
}
.sym-grid button {
	border-bottom: 1px solid #000;
}
.sym-grid button:nth-child(16n), .recent button:last-child {
	border-right: none;
}
.sym-grid .picked {
	color: #fff;
	background: #3399ff;
}
.sym-grid .large {
	font-size: 26px;
}
.sym-grid .mid {
	font-size: 16px;
}
.sym-grid .tiny {
	font-size: 12px;
}
.sym-grid b {
	flex: none;
	width: 28px;
	height: 28px;
	border: 1px solid #000;
	border-radius: 50%;
	font-weight: normal;
	font-size: 18px;
	line-height: 26px;
}
.sym-grid .neg {
	color: #fff;
	background: #000;
}
.bar-grid {
	width: 16px;
}
.bar-grid .bar-thumb {
	margin-top: 89px;
}
.recent-label {
	margin-top: 10px;
	line-height: 17px;
}
.recent {
	display: grid;
	grid-template-columns: repeat(16, 30px);
	grid-auto-rows: 31px;
	width: 484px;
	height: 35px;
	margin-left: 1px;
	padding: 1px;
	border: 1px solid #828790;
}
.recent .sup {
	padding-bottom: 8px;
	font-size: 14px;
}
.code-row {
	margin-top: 11px;
}
.code {
	width: 72px;
	height: 20px;
	margin: 0 8px 0 5px;
	padding: 0 3px;
	border: 1px solid #abadb3;
}
.key-row {
	gap: 10px;
	margin: 4px 0 0 1px;
}
.btn {
	min-width: 75px;
	height: 22px;
	padding: 0 7px;
	border: 1px solid #707070;
	border-radius: 3px;
	background: linear-gradient(#f2f2f2, #ebebeb 50%, #ddd 50%, #cfcfcf);
}
.key-row .btn {
	min-width: 89px;
}
.btn-main {
	border-color: #3c9fd8;
	box-shadow: inset 0 0 0 1px #9fdcf8;
}
.dlg-foot {
	display: flex;
	justify-content: flex-end;
	gap: 9px;
	padding: 9px 0 2px;
}
.grip {
	position: absolute;
	right: 0;
	bottom: 0;
}
.pointer {
	position: absolute;
	z-index: 3;
	left: 368px;
	top: 163px;
}
```
